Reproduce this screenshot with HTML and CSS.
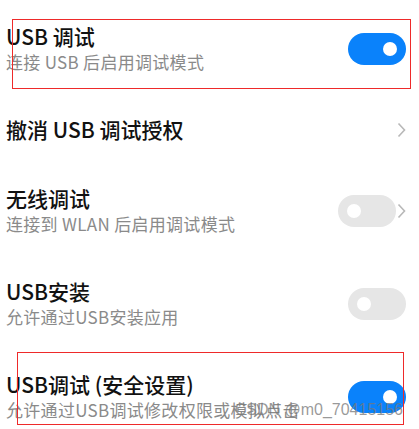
FILE: index.html
```
<!DOCTYPE html>
<html lang="zh-CN">

<head>
    <meta charset="UTF-8">
    <meta name="viewport" content="width=device-width, initial-scale=1.0">
    <title>开发者选项</title>
    <link rel="stylesheet" href="styles.css">
</head>

<body>
    <div class="list">
        <div class="row">
            <div class="text">
                <p class="title">USB 调试</p>
                <p class="desc">连接 USB 后启用调试模式</p>
            </div>
            <span class="switch on"><span class="knob"></span></span>
        </div>
        <div class="row single">
            <div class="text">
                <p class="title">撤消 USB 调试授权</p>
            </div>
            <svg class="chevron" width="9" height="16" viewBox="0 0 9 16">
                <path d="M1.5 1.5 L7.5 8 L1.5 14.5" fill="none" stroke="#b8b8b8" stroke-width="1.6" />
            </svg>
        </div>
        <div class="row">
            <div class="text">
                <p class="title">无线调试</p>
                <p class="desc">连接到 WLAN 后启用调试模式</p>
            </div>
            <span class="switch"><span class="knob"></span></span>
            <svg class="chevron" width="9" height="16" viewBox="0 0 9 16">
                <path d="M1.5 1.5 L7.5 8 L1.5 14.5" fill="none" stroke="#b8b8b8" stroke-width="1.6" />
            </svg>
        </div>
        <div class="row">
            <div class="text">
                <p class="title">USB安装</p>
                <p class="desc">允许通过USB安装应用</p>
            </div>
            <span class="switch"><span class="knob"></span></span>
        </div>
        <div class="row">
            <div class="text">
                <p class="title">USB调试 (安全设置)</p>
                <p class="desc">允许通过USB调试修改权限或模拟点击</p>
            </div>
            <span class="switch on"><span class="knob"></span></span>
        </div>
    </div>

    <!-- annotations on top of the screenshot -->
    <div class="mark mark-top"></div>
    <div class="mark mark-bottom"></div>
    <div class="watermark">CSDN @m0_70415156</div>
</body>

</html>
```

FILE: styles.css
```
body {
    margin: 0;
    background-color: #fff;
    font-family: "Noto Sans CJK SC", "Noto Sans", sans-serif;
    position: relative;
    overflow: hidden;
    height: 429px;
}

.list {
    padding-top: 2px;
}

.row {
    display: flex;
    align-items: center;
    padding: 21px 13px 21px 6px;
}

.text {
    flex: 1;
}

.title {
    margin: 0;
    font-size: 21px;
    line-height: 27px;
    font-weight: 500;
    color: #111;
}

.desc {
    margin: 0;
    font-size: 17px;
    line-height: 24px;
    color: #8a8a8a;
    letter-spacing: 0.3px;
}

.switch {
    width: 58px;
    height: 32px;
    border-radius: 16px;
    background-color: #e6e6e6;
    display: flex;
    align-items: center;
    padding: 0 9px;
    box-sizing: border-box;
}

.switch.on {
    background-color: #0a82fb;
    justify-content: flex-end;
}

.knob {
    width: 14px;
    height: 14px;
    border-radius: 50%;
    background-color: #fff;
}

.chevron {
    display: block;
    margin-left: 1px;
}

.mark {
    position: absolute;
    border: 1px solid #ee2a2a;
}

.mark-top {
    left: 12px;
    top: 19px;
    width: 397px;
    height: 68px;
}

.mark-bottom {
    left: 17px;
    top: 352px;
    width: 385px;
    height: 71px;
}

.watermark {
    position: absolute;
    right: 16px;
    top: 399px;
    font-family: "Liberation Sans", sans-serif;
    font-size: 16px;
    line-height: 22px;
    color: rgba(120, 120, 120, 0.75);
}
```
